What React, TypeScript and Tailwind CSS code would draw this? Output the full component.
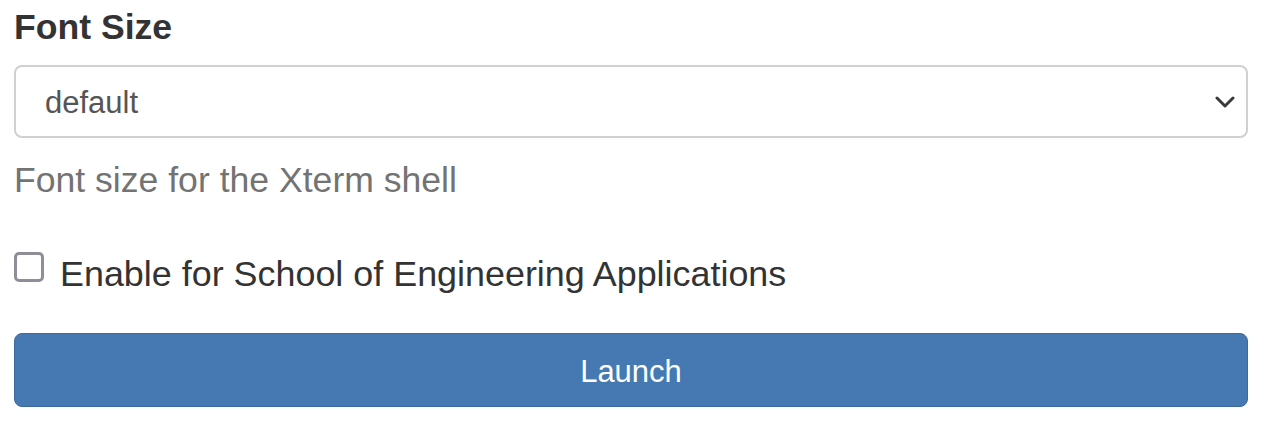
import React, { useState } from 'react';

const App = () => {
	const [checked, setChecked] = useState(false);

	return (
		<div
			className="min-h-screen bg-white pl-[14px] pr-[18px] pt-[7px]"
			style={{ fontFamily: '"Liberation Sans", Arial, Helvetica, sans-serif' }}
		>
			<label className="block text-[35.6px] leading-[40px] font-bold text-[#333333]">Font Size</label>

			<div className="mt-[18px] flex h-[73px] items-center justify-between rounded-[8px] border-2 border-[#d0d0d0] bg-white pl-[29px] pr-[11px]">
				<span className="pt-[4px] text-[31px] text-[#555555]">default</span>
				<svg width="20" height="12" viewBox="0 0 20 12" fill="none">
					<path
						d="M2 2 L10 10 L18 2"
						stroke="#3a3a3a"
						strokeWidth="3"
						strokeLinecap="round"
						strokeLinejoin="round"
					/>
				</svg>
			</div>

			<p className="mt-[22px] text-[35.6px] leading-[40px] text-[#737373]">Font size for the Xterm shell</p>

			<div
				className="mt-[52px] flex cursor-pointer items-start gap-[16px]"
				onClick={() => setChecked(!checked)}
			>
				<div className="h-[30px] w-[30px] shrink-0 rounded-[5px] border-[3px] border-[#8e8e98] bg-white" />
				<span className="pt-[2px] text-[35.9px] leading-[40px] text-[#333333]">
					Enable for School of Engineering Applications
				</span>
			</div>

			<button className="mt-[39px] flex h-[74px] w-full items-center justify-center rounded-[8px] border-[1.5px] border-[#3c6a9e] bg-[#4679b2] pt-[4px] text-[31px] text-white">
				Launch
			</button>
		</div>
	);
};

export default App;
